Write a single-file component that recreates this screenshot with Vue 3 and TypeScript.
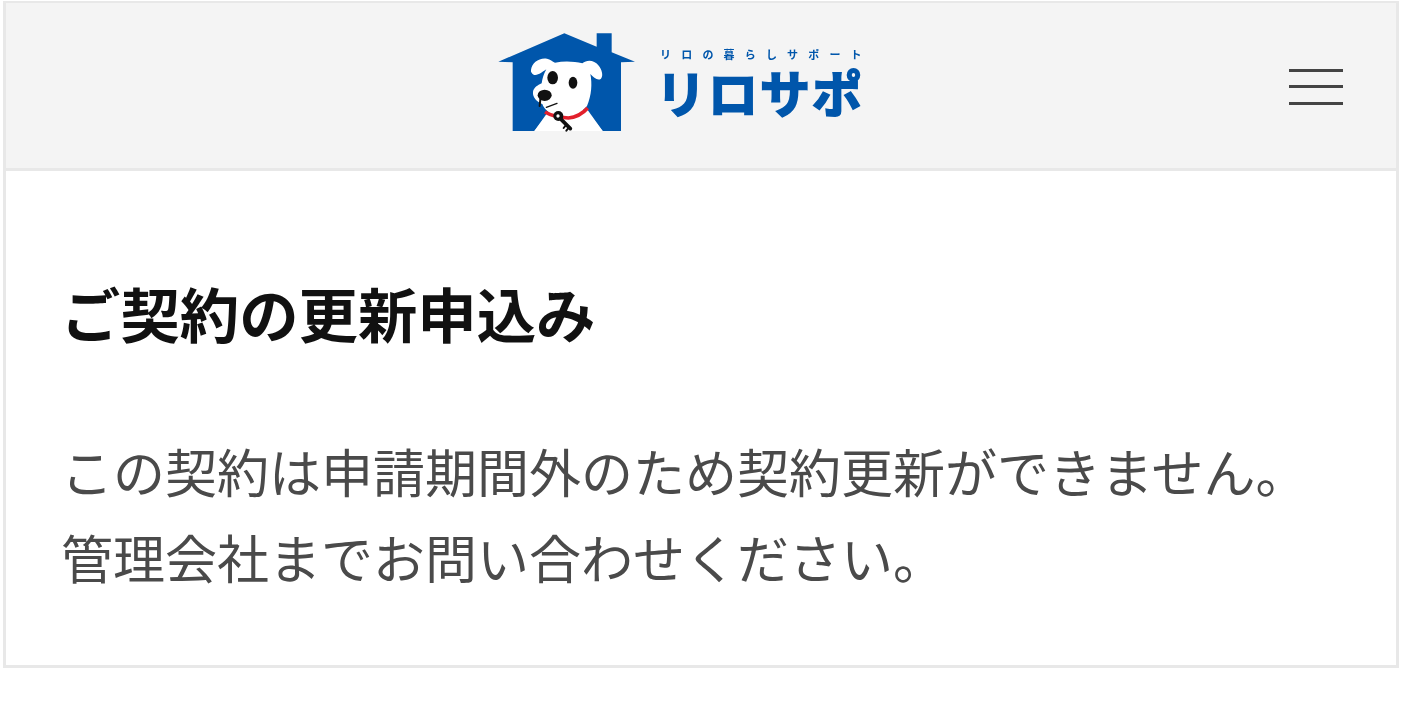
<script setup lang="ts">
const title = 'ご契約の更新申込み'
const lines: string[] = [
  'この契約は申請期間外のため契約更新ができません。',
  '管理会社までお問い合わせください。',
]
</script>

<template>
  <div class="page">
    <div class="frame">
      <header class="header">
        <div class="logo">
          <svg class="mark" viewBox="0 0 510 375" aria-hidden="true">
            <path class="blue" d="M52 125 L250 40 L347 80 L347 40 L392 40 L392 97 L462 125 L420 127 L420 333 L365 333 L320 275 L205 275 L160 333 L95 333 L95 127 Z" />
            <path class="white" d="M160 333 L205 270 L320 270 L365 333 Z" />
            <path class="white" d="M150 150 C152 128 175 112 198 116 C208 118 214 124 222 128 C250 122 280 124 304 130 C318 118 340 120 352 136 C362 148 368 166 360 176 C350 184 338 172 328 162 C334 190 332 226 318 258 C300 282 262 292 230 290 C205 282 188 266 184 252 C168 246 154 232 156 216 C158 202 170 196 182 190 C184 176 188 162 196 148 C184 156 170 168 158 164 C152 160 149 156 150 150 Z" />
            <ellipse class="ink" cx="215" cy="173" rx="16" ry="20" />
            <ellipse class="ink" cx="276" cy="188" rx="13" ry="18" />
            <ellipse class="ink" cx="191" cy="226" rx="21" ry="17" />
            <path class="ink-line" d="M178 238 L176 258" />
            <path class="ink-line thin" d="M196 262 L228 250" />
            <path class="red-line" d="M192 276 C212 288 232 292 262 294 C284 292 304 282 320 264" />
            <circle class="ink" cx="232" cy="288" r="15" />
            <circle class="white" cx="231" cy="288" r="5" />
            <path class="ink-line key" d="M238 296 L268 326" />
            <path class="ink-line" d="M256 314 L248 324 M264 322 L256 332" />
          </svg>
          <div class="wordmark">
            <span class="tagline">リロの暮らしサポート</span>
            <span class="brand">リロサポ</span>
          </div>
        </div>
        <button class="menu" type="button" aria-label="メニュー">
          <span class="bar"></span>
          <span class="bar"></span>
          <span class="bar"></span>
        </button>
      </header>
      <main class="content">
        <h1 class="title">{{ title }}</h1>
        <p class="message">
          <span v-for="line in lines" :key="line" class="line">{{ line }}</span>
        </p>
      </main>
    </div>
  </div>
</template>

<style>
html, body { margin: 0; background: #fff; }
</style>

<style scoped>
.page {
  width: 1402px;
  height: 710px;
  padding: 1px 3px 0;
  box-sizing: border-box;
  font-family: "Noto Sans CJK JP", "Noto Sans", sans-serif;
}
.frame {
  height: 667px;
  box-sizing: border-box;
  border: 3px solid #e8e8e8;
  border-top-width: 2px;
}
.header {
  height: 168px;
  box-sizing: border-box;
  background: #f4f4f4;
  border-bottom: 3px solid #e8e8e8;
  display: grid;
  grid-template-columns: 1fr auto 1fr;
  align-items: center;
  padding-right: 53px;
}
.logo {
  grid-column: 2;
  display: flex;
  align-items: flex-start;
  height: 125px;
  margin-left: -4px;
  margin-top: -7px;
  filter: blur(0.6px);
}
.mark { width: 170px; height: 125px; display: block; flex: none; }
.blue { fill: #0056ab; }
.white { fill: #fff; }
.ink { fill: #111; }
.ink-line { stroke: #111; stroke-width: 6; fill: none; stroke-linecap: round; }
.thin { stroke-width: 4; }
.key { stroke-width: 11; }
.red-line { stroke: #e2202c; stroke-width: 11; fill: none; }
.wordmark {
  display: flex;
  flex-direction: column;
  color: #0056ab;
  margin-top: 27px;
  margin-left: 9px;
}
.tagline {
  font-size: 11px;
  line-height: 14px;
  font-weight: 700;
  letter-spacing: 10.2px;
  white-space: nowrap;
  width: 204px;
}
.brand {
  font-size: 50px;
  line-height: 54px;
  font-weight: 700;
  letter-spacing: 2px;
  white-space: nowrap;
  -webkit-text-stroke: 2px #0056ab;
  margin-top: 3px;
  margin-left: -4px;
}
.menu {
  grid-column: 3;
  justify-self: end;
  width: 54px;
  height: 36px;
  padding: 0;
  border: 0;
  background: transparent;
  display: flex;
  flex-direction: column;
  justify-content: space-between;
  margin-top: 2px;
  filter: blur(0.5px);
}
.bar { display: block; height: 3px; background: #444; }
.content { padding: 0 55px; filter: blur(0.4px); }
.title {
  margin: 103px 0 0;
  font-size: 59.4px;
  line-height: 76px;
  font-weight: 700;
  color: #111;
}
.message {
  margin: 78px 0 0;
  font-size: 52px;
  line-height: 85.5px;
  color: #4a4a4a;
}
.line { display: block; white-space: nowrap; }
</style>
